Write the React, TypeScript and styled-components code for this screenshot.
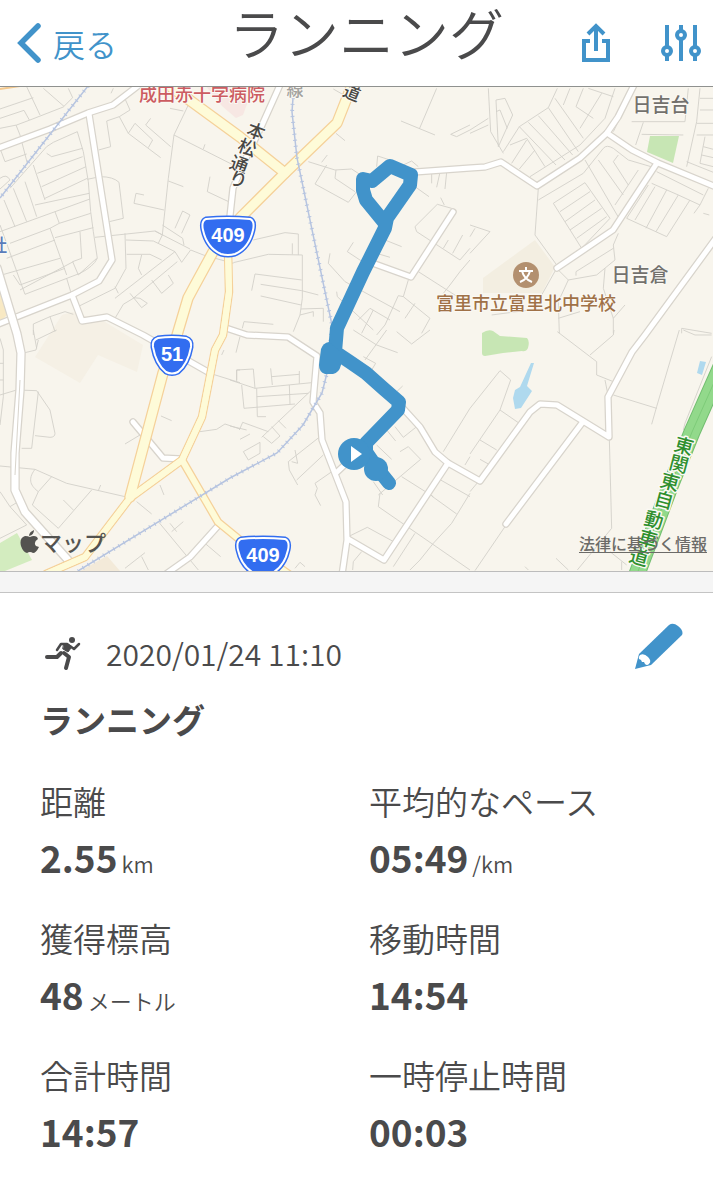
import React from 'react';
import styled, { createGlobalStyle } from 'styled-components';

const BLUE = '#4193ca';
const INK = '#4a4a4b';
const FONT = "'Noto Sans CJK JP', 'Noto Sans', sans-serif";

const GlobalStyle = createGlobalStyle`
  *, *::before, *::after { box-sizing: border-box; }
  body { margin: 0; background: #fff; color: ${INK}; font-family: ${FONT}; }
  button { border: 0; padding: 0; background: none; color: ${BLUE}; font-family: inherit; cursor: pointer; }
  svg { display: block; }
  h1, h2, dl, dt, dd { margin: 0; }
`;

const Header = styled.header`
  display: grid;
  grid-template-columns: 1fr auto 1fr;
  height: 87px;
  padding: 0 12px 0 16px;
  border-bottom: 1px solid #8f918f;
`;

const BackButton = styled.button`
  display: flex;
  align-items: center;
  gap: 10px;
  font-size: 32px;
  line-height: 40px;
  font-weight: 350;
`;

const Title = styled.h1`
  padding-left: 16px;
  font-size: 55px;
  line-height: 62px;
  font-weight: 350;
`;

const Actions = styled.div`
  display: flex;
  align-items: center;
  justify-content: flex-end;
  gap: 51px;
`;

const MapPanel = styled.section`
  position: relative;
  overflow: hidden;
  border-bottom: 1px solid #bcbcbc;
`;

const MapDrawing = styled.svg`
  width: 100%;
  height: auto;
  background: #f8f5ed;
`;

const MapCredit = styled.div`
  position: absolute;
  left: 20px;
  bottom: 14px;
  display: flex;
  align-items: center;
  color: #545350;
  font-size: 22px;
  line-height: 32px;
  font-weight: 500;
`;

const LegalLink = styled.a`
  position: absolute;
  right: 6px;
  bottom: 16px;
  color: #6c6b68;
  font-size: 16px;
  line-height: 24px;
  font-weight: 500;
  text-decoration: underline;
  text-decoration-thickness: 1px;
  text-underline-offset: 2px;
`;

const Divider = styled.div`
  height: 21px;
  background: #f5f5f5;
  border-bottom: 1px solid #c4c4c4;
`;

const Details = styled.main`
  padding: 30px 15px 40px 40px;
`;

const MetaRow = styled.div`
  display: flex;
  align-items: center;
  height: 60px;
  padding-right: 15px;
  font-size: 30px;
  line-height: 60px;
  font-weight: 350;
`;

const Timestamp = styled.time`
  flex: 1;
  margin-left: 24px;
`;

const EditButton = styled.button`
  align-self: flex-start;
`;

const ActivityName = styled.h2`
  margin-top: 8px;
  font-size: 33px;
  line-height: 56px;
  font-weight: 700;
`;

const Stats = styled.dl`
  display: grid;
  grid-template-columns: 1fr 1fr;
  row-gap: 25px;
  margin-top: 26px;
`;

const StatLabel = styled.dt`
  font-size: 33px;
  line-height: 56px;
  font-weight: 350;
`;

const StatValue = styled.dd`
  font-size: 37px;
  line-height: 56px;
  font-weight: 700;
`;

const Unit = styled.span`
  margin-left: 4px;
  font-size: 22px;
  line-height: 22px;
  font-weight: 350;
`;

/* Side streets, one block per part of the map, drawn at three units per pixel. */
const streets = [
  { x: 0, y: 85, d: 'M0 130L50 120 90 105 190 66 218 38 205 10M130 10L192 64M80 5L120 90M0 72L100 38M0 100L72 76 88 105M48 120L60 150 82 235M0 190L15 230 80 207M0 280Q20 265 30 285L0 312M30 310L140 185 160 172 232 140 250 200 265 290 272 380 280 440 292 520Q280 545 240 565L75 628 0 420M140 205L155 215 248 190M112 265L248 215M125 305L258 245M135 340L262 280M105 360L268 325M0 440L270 342M100 240L135 345M165 380L178 415 272 385M30 475L150 430 178 415M20 520L165 465M12 568L180 520M40 570L60 600 195 550M60 615L220 530M150 430L200 570M165 458L280 428M240 440L245 520 218 530 235 570L290 520M200 580L212 620M12 345L45 425M40 310L80 410M75 290L110 395M262 283L300 275Q340 275 357 292L370 400 328 410M320 108L332 185 296 195M320 108L358 95 390 75 370 30M340 10L333 25M358 95L385 145 405 115 458 165 445 188M385 145L482 218M452 100L437 120 512 185M565 60L522 150 505 280 487 450M510 70L550 78M522 150L700 240M615 178L610 192M505 288L550 305M630 275L622 320 690 352M432 330L408 325 402 355 492 375M285 457L465 438 570 492M465 438L487 450 475 475M375 445L378 550 345 610 238 663M345 605L355 625M378 465L460 468 525 500 345 640M380 508L450 508 485 525M425 510L415 550 425 570M525 430L548 378 570 390 545 445M487 420L548 460 552 480M525 500L545 532 572 495 610 510 700 535M532 530L400 640 370 658 345 700M455 585L485 625 520 595 505 570M390 625L425 668 442 655 420 640 400 638M100 750L100 717 150 695 165 740M150 695L195 680 220 688' },
  { x: 230, y: 85, d: 'M620 10L568 132M513 108L615 150M720 120L662 148 680 155 720 135M310 12L350 35M318 145L345 167M292 210L275 232M235 230L315 255 365 252 400 275M290 240L255 297 355 352 380 320M318 255L315 280 375 320M440 245L443 213 480 225M520 240L545 228 565 245M605 265v30M630 262l-10 45M650 262l-5 50M555 305L597 335M632 338L643 360M665 370L622 358 555 425 560 440 690 525 720 490M640 490L655 465M668 505L698 450M70 465L165 443 205 447 205 510M187 475V508M10 533L115 508 217 510 217 640 210 690 190 740M65 617L75 567 215 585M92 598L215 617 265 630M92 633L213 660M213 672L280 670 280 710M210 690L250 680 250 695M37 730L42 710 130 718M370 472L352 500 420 545M300 505L295 535 345 590 510 680M320 620L322 635 430 735M395 745L430 675M385 705L420 670 480 705M465 465L515 485M440 505L480 517M535 585L520 635 505 632 465 720 440 750M565 560L690 640M720 525L690 560 660 600 640 625M520 635L600 700 575 745M555 655L525 700' },
  { x: 470, y: 85, d: 'M55 10L62 140 100 205M78 45L105 40 128 90 85 185ZM78 80L90 75 112 130M0 135L55 100M0 145L55 120M100 200L148 125 235 68 262 10M148 125L258 240M175 112L285 225M205 92L308 210M235 68L325 200M255 40L340 160M125 235L170 165M148 252L195 195M120 180L170 160 225 245M180 275L330 180 405 100 435 10M340 10L318 65 370 100M300 10L280 60M355 10L430 35M395 25L330 130M490 18L430 140M485 110H645L655 10M515 148L640 150M520 112L497 180M690 10L680 110 650 245M690 40H730M690 75H730M680 115H730M680 150H730M705 155L690 235 730 245M700 185L730 193M695 210L730 218M650 230L730 262M205 345L340 265 400 190Q410 178 430 190L475 225 560 250M205 310L195 450 260 540M445 210L430 230 475 300M505 255L435 360M345 225L450 405M385 225L460 330M250 355L345 293 420 400 335 490ZM270 380L360 320M285 410L375 345M300 435L395 370M320 460L410 395M545 295L625 330 690 360 715 310M560 260L700 330M535 300L470 400 590 455 660 345M555 305L495 405M590 315L528 430M625 330L558 440M690 360L672 385M700 385L718 390M0 420L60 440 0 505M15 430L0 455M260 550L295 585 265 650 268 745M260 550L215 630M295 585L380 570 435 525 430 480 445 445M430 490L318 560 318 572M405 550L400 610 430 700 430 745M430 700L465 660M265 700L330 680M65 690L180 675M635 745L635 730 725 745' },
  { x: 0, y: 330, d: 'M115 30L108 60 75 68M100 0L110 55M108 30L170 0M0 195L50 180 110 182 150 240 165 310Q165 322 150 322L105 317M115 185L95 355H65M0 25L10 60 10 200 0 285M0 100H10M0 150H10M0 408L105 418 200 460 375 500M105 418C80 450 95 470 115 485L155 440M115 485L97 525 175 595 275 480M190 510L220 540M302 465L295 482M0 485L30 530 80 585 0 625M30 530L50 518M375 342L420 315M483 258L515 272M600 305L650 298 675 282 720 297M630 130L720 158M665 75L672 60M720 120H710V155M480 465L492 495M410 515L455 552M475 575L595 720M510 580L530 605M515 605L550 575M615 640L662 680M375 715L435 668M425 680L445 720' },
  { x: 230, y: 330, d: 'M30 20L18 68M0 150L75 175 245 158M20 150V120L70 117 75 175M122 115L127 165M125 140L208 133M208 123V161M35 165L42 235 195 222M80 200L235 190M80 175L82 260H108M178 165L180 222M245 180L95 322M0 288L50 300M28 300L38 277 115 305M125 290L150 318 125 340 100 320M145 272L168 295M40 365L90 337 90 370 55 390ZM30 328L60 312M270 320L175 395 178 420 203 465M195 360L203 400 185 395M280 375L200 450M320 415L255 460 262 475 255 495 272 527M370 0L440 45 503 68M405 90L470 0M400 80L437 100 425 120M500 5L545 42 600 0M495 190L518 168M560 290L520 322 495 290M470 300L497 333M440 345L485 388M510 365L535 350 572 388 445 495M450 490L445 530 720 720M430 455L458 495M640 365L720 235M515 440L610 500M632 450L720 500M605 498L680 552M720 490L665 580 610 640 570 690 540 720M355 620L412 592 500 640M555 610L490 710M395 665L370 695 368 720M195 715L210 697 225 710M705 405L720 380' },
  { x: 470, y: 330, d: 'M262 5L380 95 380 135 430 155M432 0L430 15 360 75M628 0L560 230 545 283M430 195L560 235M405 150L412 185M640 0L675 15H725M0 235L90 122 122 150 90 240 0 372M90 240L145 278M30 330L80 360M30 388L55 402M0 485L25 455M418 325L425 595 322 720M105 590L15 722M420 665L470 705M258 685L295 720M455 695V720M165 710L175 720M725 80L645 280 640 300' },
];

const whiteRoads = [
  'M-4 149L50 129 88 113 113 105 139 85',
  'M89 114L112 260 99 281 72 295-4 325',
  'M72 295L82 321 107 317 143 335 208 372',
  'M280 85L262 125 245 160 233 188 229 225',
  'M415 172L470 168 485 167 501 162 537 186 580 158 607 133 618 117 634 85',
  'M607 133L632 150 658 163 716 187',
  'M657 163L613 230 557 268',
  'M716 238L645 335 632 352 608 397 609 437 557 405 540 404 530 412 480 481 448 463 435 452 420 427 400 405',
  'M582 423L506 524',
  'M448 463L384 560 348 539',
  'M226 328L247 335 288 337 317 356 313 402 320 413 322 440 346 502 347 540 342 575',
  'M336 473L350 460',
  'M375 264L411 277 453 212',
  'M133 422L163 458 182 459',
  'M217 527L190 557 166 574',
];
const wideWhiteRoads = ['M-3 268L17 334 21 353 20 390 15 453 15 490 25 512 68 560'];

const yellowRoads = [
  'M182 460L218 522 240 540 290 575',
  'M228 250L229 292 223 335 215 350 202 417 182 460 130 498 85 557 46 574',
];
const wideYellowRoads = [
  'M172 88L188 99 240 137 285 173',
  'M352 85L337 123 285 173 240 218 213 252 195 285 188 298 177 335 163 373 130 497',
];

const railways = [
  'M88 86L0 198',
  'M293 98L292 112 297 158 332 325 327 373 322 393 303 425 277 453 230 478 78 571',
];

const route =
  'M384 222L366 200 363 190 363 179 372 181 390 166 411 175 410 185 387 218 385 228 363 272 337 328 335 352 350 362 366 373 384 389 399 402 398 410 366 443 366 452 377 468 389 483';

interface RoadProps { paths: string[]; width: number; fill: string; edge: string }

const Roads = ({ paths, width, fill, edge }: RoadProps) => (
  <g fill="none" strokeLinejoin="round" strokeLinecap="round">
    {paths.map((d) => <path key={`e${d}`} d={d} stroke={edge} strokeWidth={width + 2.5} />)}
    {paths.map((d) => <path key={d} d={d} stroke={fill} strokeWidth={width} />)}
  </g>
);

const MapText = styled.text<{ $size?: number; $halo?: number }>`
  font-family: ${FONT};
  font-size: ${({ $size = 18 }) => $size}px;
  font-weight: 500;
  text-anchor: middle;
  stroke: #fbf9f4;
  stroke-width: ${({ $halo = 2 }) => $halo}px;
  stroke-linejoin: round;
  paint-order: stroke;
`;

const ShieldNumber = styled.text`
  font-family: 'Liberation Sans', sans-serif;
  font-size: 20px;
  font-weight: 700;
  text-anchor: middle;
  fill: #fff;
`;

const Shield = ({ x, y, label, wide }: { x: number; y: number; label: string; wide?: boolean }) => {
  const d = wide
    ? 'M-22-17Q0-19 22-17Q27-15 25-6Q21 12 7 18Q0 20-7 18Q-21 12-25-6Q-27-15-22-17Z'
    : 'M-14-17Q0-19 14-17Q20-15 19-8Q16 9 6 17Q0 20-6 17Q-16 9-19-8Q-20-15-14-17Z';
  return (
    <g transform={`translate(${x} ${y})`}>
      <path d={d} fill="#326df0" stroke="#326df0" strokeWidth="5" />
      <path d={d} fill="#326df0" stroke="#fff" strokeWidth="2" />
      <ShieldNumber y="6">{label}</ShieldNumber>
    </g>
  );
};

const highwayLetters: [string, number, number][] = [
  ['東', 684, 446], ['関', 679, 464], ['東', 670, 482], ['自', 664, 500],
  ['動', 654, 520], ['車', 648, 539], ['道', 639, 557],
];
const streetLetters: [string, number, number][] = [
  ['本', 256, 132], ['松', 247, 148], ['通', 239, 165], ['り', 238, 180],
];

const RouteMap = () => (
  <MapDrawing viewBox="0 87 713 484" role="img" aria-label="ランニングのルート">
    <g fill="#f3eee1">
      <path d="M62 315L72 312 105 322 143 345 137 372 98 355 80 383 35 357Z" fill="#f5f0e5" />
      <path d="M483 278L535 240 555 267 542 293H483Z" />
      <path d="M80 571L107 556 120 571Z" fill="#f3ead9" />
      <path d="M0 285L7 315 0 322Z" fill="#f8e9c4" />
    </g>
    <path d="M205 85H240L250 96 243 115 236 118 222 106Z" fill="#f7e7e3" />
    <path d="M650 136H679L673 163 647 152Z" fill="#c7e6b4" />
    <path d="M0 543L17 533 32 560 5 571H0Z" fill="#d3ecbf" />
    <path d="M482 333Q488 329 493 331L500 336 527 338Q530 341 528 348 526 352 522 351L503 353 485 356Q482 356 482 353Z" fill="#c7e6b4" />
    <path d="M531 363H534L527 386 532 391 521 408 515 409 513 398 515 390 520 387Z" fill="#afd9ee" />
    <path d="M700 361L706 362 702 375 697 373Z" fill="#afd9ee" />
    {streets.map(({ x, y, d }) => (
      <path key={d} d={d} transform={`translate(${x} ${y}) scale(0.3333)`} fill="none" stroke="#d2d0c9" strokeWidth="2.7" />
    ))}
    <Roads paths={whiteRoads} width={5} fill="#fff" edge="#d8d4cc" />
    <Roads paths={wideWhiteRoads} width={7} fill="#fff" edge="#d8d4cc" />
    <path d="M20 380L15 475" fill="none" stroke="#d8d4cc" />
    <path d="M0 89L20 86" stroke="#f4c98e" strokeWidth="2" />
    <Roads paths={yellowRoads} width={6} fill="#fefbd8" edge="#f5d19a" />
    <Roads paths={wideYellowRoads} width={9} fill="#fefbd8" edge="#f5d19a" />
    <path d={yellowRoads[1]} fill="none" stroke="#fefbd8" strokeWidth="6" />
    {railways.map((d) => (
      <g key={d} fill="none" stroke="#b6c4e0">
        <path d={d} strokeWidth="1.5" />
        <path d={d} strokeWidth="4" strokeDasharray="1 5" />
      </g>
    ))}
    <path d="M724 360L692 432 671 484 637 574" fill="none" stroke="#72be70" strokeWidth="17" />
    <path d="M724 360L692 432 671 484 637 574" fill="none" stroke="#92d98b" strokeWidth="15" />
    <path d="M724 360L692 432 671 484 637 574" fill="none" stroke="#7dcb78" />

    <MapText x="202" y="101" fill="#cc5c61">成田赤十字病院</MapText>
    <MapText x="295" y="96" $size={17} fill="#a3a29e">線</MapText>
    <MapText fill="#494845" $size={17} transform="translate(352 93) rotate(22)" y="6">道</MapText>
    {streetLetters.map(([c, x, y]) => (
      <MapText key={c} fill="#494845" $size={18} transform={`translate(${x} ${y}) rotate(20)`} y="6">{c}</MapText>
    ))}
    <MapText x="661" y="112" $size={19} fill="#73716d">日吉台</MapText>
    <MapText x="640" y="282" $size={19} fill="#73716d">日吉倉</MapText>
    <MapText x="-2" y="252" fill="#5a7cba">社</MapText>
    <MapText x="526" y="310" fill="#a07147">富里市立富里北中学校</MapText>
    {highwayLetters.map(([c, x, y]) => (
      <MapText key={`${c}${y}`} fill="#2f902f" $halo={3} $size={19} transform={`translate(${x} ${y}) rotate(15)`} y="7">{c}</MapText>
    ))}
    <circle cx="526" cy="275" r="13" fill="#b3906f" />
    <g fill="none" stroke="#fff" strokeWidth="2">
      <path d="M519 271H533M526 267V271M522 271Q524 279 532 282M530 271Q528 279 520 282" />
    </g>

    <Shield x={228} y={236} label="409" wide />
    <Shield x={172} y={355} label="51" />
    <Shield x={263} y={556} label="409" wide />

    <path d={route} fill="none" stroke={BLUE} strokeWidth="14" strokeLinejoin="round" strokeLinecap="round" />
    <path d="M329 342L341 352 341 365Q339 373 333 374L325 374Q319 372 319 365L321 349Q323 343 329 342Z" fill={BLUE} />
    <circle cx="376" cy="469" r="12" fill={BLUE} />
    <circle cx="354" cy="454" r="16" fill={BLUE} />
    <path d="M351 446L362 454 351 462Z" fill="#fff" />
  </MapDrawing>
);

const AppleMark = () => (
  <svg width="20" height="23" viewBox="0 0 20 23" fill="currentColor" aria-hidden="true">
    <path d="M14 0Q14 5 9 6Q9 2 14 0ZM10 7Q14 5 17 7L18 9Q13 12 16 16L19 17Q16 23 13 23Q10 21 7 23Q3 22 1 16Q-1 8 5 6Q8 6 10 7Z" />
  </svg>
);

const BackIcon = () => (
  <svg width="27" height="42" viewBox="0 0 27 42" fill="none" stroke="currentColor" strokeWidth="5.5" strokeLinecap="round" strokeLinejoin="miter">
    <path d="M22 4L5 21 22 38" />
  </svg>
);

const ShareIcon = () => (
  <svg width="28" height="40" viewBox="0 0 28 40" fill="none" stroke="currentColor" strokeWidth="4">
    <path d="M8 18H2V37H26V18H20" />
    <path d="M14 28V4M6 11L14 3 22 11" />
  </svg>
);

const SlidersIcon = () => (
  <svg width="40" height="36" viewBox="0 0 40 36" fill="none" stroke="currentColor" strokeWidth="4">
    <path d="M6 0V21M6 31V36M20 0V5M20 15V36M34 0V21M34 31V36" />
    <circle cx="6" cy="26" r="4" />
    <circle cx="20" cy="10" r="4" />
    <circle cx="34" cy="26" r="4" />
  </svg>
);

const RunnerIcon = () => (
  <svg width="42" height="36" viewBox="0 0 42 36" fill="none" stroke={INK} strokeLinecap="round" strokeLinejoin="round">
    <circle cx="32" cy="5" r="3" fill={INK} stroke="none" />
    <path d="M17 15L21 9H27M30 11L34 14 39 9" strokeWidth="2.5" />
    <path d="M24 9H29L31 13 28 17 23 14Z" fill={INK} strokeWidth="1" />
    <path d="M24 18L29 22 26 33" strokeWidth="4" />
    <path d="M21 18L17 22H7" strokeWidth="4" />
  </svg>
);

const PencilIcon = () => (
  <svg width="48" height="46" viewBox="0 0 48 46" fill="currentColor">
    <path d="M4 31L34 2Q38-1 43 3Q49 8 47 12L16 42 0 46Z" />
    <path d="M5 32Q9 30 13 34Q17 38 14 41Q12 43 10 41L9 39 7 39 6 37 4 36Q3 34 5 32Z" fill="#fff" />
  </svg>
);

const stats = [
  { label: '距離', value: '2.55', unit: 'km' },
  { label: '平均的なペース', value: '05:49', unit: '/km' },
  { label: '獲得標高', value: '48', unit: 'メートル' },
  { label: '移動時間', value: '14:54' },
  { label: '合計時間', value: '14:57' },
  { label: '一時停止時間', value: '00:03' },
];

export default function App() {
  return (
    <>
      <GlobalStyle />
      <Header>
        <BackButton type="button"><BackIcon />戻る</BackButton>
        <Title>ランニング</Title>
        <Actions>
          <button type="button" aria-label="共有"><ShareIcon /></button>
          <button type="button" aria-label="設定"><SlidersIcon /></button>
        </Actions>
      </Header>
      <MapPanel>
        <RouteMap />
        <MapCredit><AppleMark />マップ</MapCredit>
        <LegalLink href="#legal">法律に基づく情報</LegalLink>
      </MapPanel>
      <Divider />
      <Details>
        <MetaRow>
          <RunnerIcon />
          <Timestamp dateTime="2020-01-24T11:10">2020/01/24 11:10</Timestamp>
          <EditButton type="button" aria-label="編集"><PencilIcon /></EditButton>
        </MetaRow>
        <ActivityName>ランニング</ActivityName>
        <Stats>
          {stats.map(({ label, value, unit }) => (
            <div key={label}>
              <StatLabel>{label}</StatLabel>
              <StatValue>{value}{unit && <Unit>{unit}</Unit>}</StatValue>
            </div>
          ))}
        </Stats>
      </Details>
    </>
  );
}
